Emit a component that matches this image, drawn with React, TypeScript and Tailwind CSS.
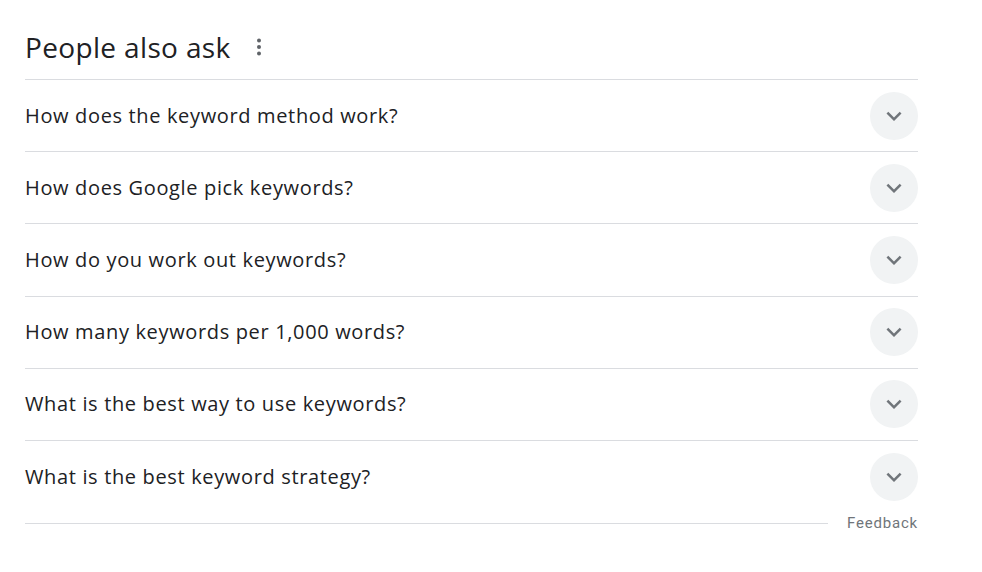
const QUESTIONS = [
  'How does the keyword method work?',
  'How does Google pick keywords?',
  'How do you work out keywords?',
  'How many keywords per 1,000 words?',
  'What is the best way to use keywords?',
  'What is the best keyword strategy?',
]

function Chevron() {
  return (
    <svg width="30" height="30" viewBox="0 0 24 24" fill="#70757a">
      <path d="M16.59 8.59L12 13.17 7.41 8.59 6 10l6 6 6-6z" />
    </svg>
  )
}

function Dots() {
  return (
    <svg width="24" height="24" viewBox="0 0 24 24" fill="#5f6368">
      <circle cx="12" cy="5.5" r="2" />
      <circle cx="12" cy="12" r="2" />
      <circle cx="12" cy="18.5" r="2" />
    </svg>
  )
}

export default function App() {
  return (
    <div className="w-[982px] h-[572px] bg-white" style={{ fontFamily: '"Open Sans", Roboto, sans-serif' }}>
      <div className="ml-[25px] w-[893px]">
        <div className="h-[79px] flex items-center pt-[14px] gap-[16px]">
          <h2 className="text-[28px] text-[#202124] leading-none tracking-[0.35px]">People also ask</h2>
          <Dots />
        </div>
        <ul>
          {QUESTIONS.map(q => (
            <li
              key={q}
              className="h-[72.2px] border-t border-[#dadce0] flex items-center justify-between"
            >
              <span className="text-[20px] text-[#202124] tracking-[0.65px]">{q}</span>
              <span className="w-[48px] h-[48px] rounded-full bg-[#f1f3f4] flex items-center justify-center">
                <Chevron />
              </span>
            </li>
          ))}
        </ul>
        <div className="flex items-center gap-[19px]">
          <div className="flex-1 border-t border-[#dadce0]" />
          <span className="text-[15px] text-[#70757a] tracking-[0.8px]" style={{ fontFamily: 'Roboto, sans-serif' }}>Feedback</span>
        </div>
      </div>
    </div>
  )
}
